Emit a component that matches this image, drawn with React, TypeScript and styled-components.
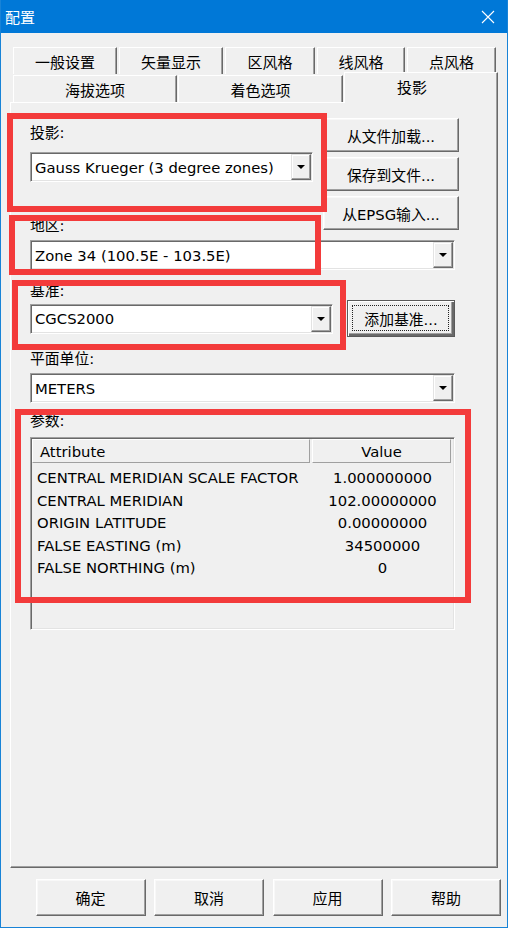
import React from "react";
import styled, { createGlobalStyle } from "styled-components";

const FONT = `"DejaVu Sans", "Noto Sans CJK SC", sans-serif`;

const GlobalStyle = createGlobalStyle`
  html, body { margin: 0; padding: 0; background: #f0f0f0; }
  body { font-family: ${FONT}; font-size: 14.8px; color: #000; }
  * { box-sizing: border-box; }
`;

const Window = styled.div`
  position: relative;
  width: 508px;
  height: 928px;
  background: #f0f0f0;
  border: 1px solid #1883d7;
  border-top: none;
  display: flex;
  flex-direction: column;
`;

const TitleBar = styled.div`
  height: 33px;
  background: #0078d7;
  display: flex;
  align-items: center;
  justify-content: space-between;
  padding-left: 4px;
  color: #fff;
  font-family: "Noto Sans CJK SC", sans-serif;
  font-size: 15px;
`;

const CloseBtn = styled.div`
  width: 38px;
  height: 33px;
  display: flex;
  align-items: center;
  justify-content: center;
`;

const Body = styled.div`
  flex: 1;
  display: flex;
  flex-direction: column;
  padding: 14px 0 0 9px;
`;

const TabRow = styled.div<{ $h: number; $gap: number }>`
  display: flex;
  align-items: flex-end;
  gap: ${({ $gap }) => $gap}px;
  height: ${({ $h }) => $h}px;
  margin-left: 3px;
`;

const Tab = styled.div<{ $w: number; $active?: boolean }>`
  position: relative;
  width: ${({ $w }) => $w}px;
  height: ${({ $active }) => ($active ? 31 : 27)}px;
  margin-bottom: ${({ $active }) => ($active ? -1 : 0)}px;
  z-index: ${({ $active }) => ($active ? 2 : 1)};
  display: flex;
  align-items: center;
  justify-content: center;
  padding-right: ${({ $active }) => ($active ? 18 : 0)}px;
  padding-bottom: ${({ $active }) => ($active ? 4 : 0)}px;
  background: #f0f0f0;
  border-top: 1px solid #fff;
  border-left: 1px solid #fff;
  border-right: 1px solid #696969;
  box-shadow: inset -1px 0 #a0a0a0;
  font-size: 15px;
`;

const Panel = styled.div`
  width: 488px;
  height: 766px;
  border: 1px solid;
  border-color: #fff #696969 #696969 #fff;
  box-shadow: inset -1px -1px #a0a0a0;
  padding: 15px 0 0 19px;
  display: flex;
  flex-direction: column;
`;

const TopArea = styled.div`
  display: flex;
  align-items: flex-start;
`;

const LeftCol = styled.div`
  width: 283px;
  display: flex;
  flex-direction: column;
`;

const RightCol = styled.div`
  margin-left: 10px;
  display: flex;
  flex-direction: column;
  gap: 5px;
`;

const Label = styled.div<{ $mt: number }>`
  margin-top: ${({ $mt }) => $mt}px;
  height: 18px;
  line-height: 18px;
  white-space: nowrap;
`;

const ComboBox = styled.div<{ $w: number; $mt?: number }>`
  width: ${({ $w }) => $w}px;
  height: 30px;
  margin-top: ${({ $mt = 0 }) => $mt}px;
  display: flex;
  background: #fff;
  border: 1px solid;
  border-color: #a0a0a0 #fff #fff #a0a0a0;
  box-shadow: inset 1px 1px #696969, inset -1px -1px #e3e3e3;
  padding: 1px;
`;

const ComboText = styled.div`
  flex: 1;
  padding-left: 3px;
  display: flex;
  align-items: center;
  white-space: nowrap;
`;

const DropBtn = styled.div`
  width: 20px;
  background: #f0f0f0;
  border: 1px solid;
  border-color: #e3e3e3 #696969 #696969 #e3e3e3;
  box-shadow: inset -1px -1px #a0a0a0, inset 1px 1px #fff;
  display: flex;
  align-items: center;
  justify-content: center;
`;

const Arrow = styled.div`
  width: 0;
  height: 0;
  border-left: 4px solid transparent;
  border-right: 4px solid transparent;
  border-top: 4px solid #000;
`;

const Button = styled.div<{ $w: number; $h: number; $default?: boolean }>`
  position: relative;
  width: ${({ $w }) => $w}px;
  height: ${({ $h }) => $h}px;
  display: flex;
  align-items: center;
  justify-content: center;
  background: #f0f0f0;
  border: 1px solid;
  border-color: ${({ $default }) =>
    $default ? "#5a5a5a" : "#fff #696969 #696969 #fff"};
  box-shadow: ${({ $default }) =>
    $default
      ? "inset 1px 1px #fff, inset -2px -2px #696969, inset -3px -3px #a0a0a0"
      : "inset -1px -1px #a0a0a0, inset 1px 1px #f8f8f8"};
  white-space: nowrap;
`;

const FocusRect = styled.span`
  position: absolute;
  inset: 4px 5px 5px 4px;
  border: 1px dotted #222;
`;

const DatumRow = styled.div`
  display: flex;
  align-items: center;
  gap: 14px;
`;

const ListView = styled.div`
  width: 425px;
  height: 193px;
  margin-top: 7px;
  background: #f0f0f0;
  border: 1px solid;
  border-color: #a0a0a0 #fff #fff #a0a0a0;
  box-shadow: inset 1px 1px #696969, inset -1px -1px #e3e3e3;
  padding: 1px;
`;

const HeaderRow = styled.div`
  display: flex;
  height: 24px;
`;

const HeaderCell = styled.div<{ $w?: number; $center?: boolean }>`
  ${({ $w }) => ($w ? `width: ${$w}px;` : "flex: 1;")}
  display: flex;
  align-items: center;
  justify-content: ${({ $center }) => ($center ? "center" : "flex-start")};
  padding-left: ${({ $center }) => ($center ? 0 : 7)}px;
  border: 1px solid;
  border-color: #fff #a0a0a0 #a0a0a0 #fff;
  margin-right: 2px;
`;

const Rows = styled.div`
  padding-top: 4px;
`;

const Row = styled.div`
  display: grid;
  grid-template-columns: 278px 1fr;
  height: 22.6px;
  line-height: 22.6px;
  padding-left: 5px;
  white-space: nowrap;
`;

const ValueCell = styled.div`
  text-align: center;
  padding-right: 3px;
`;

const ButtonRow = styled.div`
  display: flex;
  justify-content: flex-end;
  gap: 8.5px;
  margin-top: 11px;
  padding-right: 6px;
  font-size: 15px;
`;

const Mark = styled.div`
  position: absolute;
  border: 6px solid #f33b3b;
  pointer-events: none;
  z-index: 10;
`;

const params: [string, string][] = [
  ["CENTRAL MERIDIAN SCALE FACTOR", "1.000000000"],
  ["CENTRAL MERIDIAN", "102.00000000"],
  ["ORIGIN LATITUDE", "0.00000000"],
  ["FALSE EASTING (m)", "34500000"],
  ["FALSE NORTHING (m)", "0"],
];

// red annotation frames drawn over the dialog
const marks = [
  { left: 6, top: 113, width: 320, height: 99 },
  { left: 8, top: 215, width: 312, height: 60 },
  { left: 11, top: 280, width: 334, height: 70 },
  { left: 14, top: 409, width: 456, height: 194 },
];

const Combo: React.FC<{ w: number; mt?: number; text: string }> = ({ w, mt, text }) => (
  <ComboBox $w={w} $mt={mt}>
    <ComboText>{text}</ComboText>
    <DropBtn>
      <Arrow />
    </DropBtn>
  </ComboBox>
);

export default function App() {
  return (
    <Window>
      <GlobalStyle />
      <TitleBar>
        <span>配置</span>
        <CloseBtn>
          <svg width="14" height="14" viewBox="0 0 14 14">
            <path d="M1 1 L13 13 M13 1 L1 13" stroke="#fff" strokeWidth="1.1" fill="none" />
          </svg>
        </CloseBtn>
      </TitleBar>
      <Body>
        <TabRow $h={27} $gap={2}>
          <Tab $w={104}>一般设置</Tab>
          <Tab $w={104}>矢量显示</Tab>
          <Tab $w={90}>区风格</Tab>
          <Tab $w={88}>线风格</Tab>
          <Tab $w={89}>点风格</Tab>
        </TabRow>
        <TabRow $h={28} $gap={1}>
          <Tab $w={164}>海拔选项</Tab>
          <Tab $w={165}>着色选项</Tab>
          <Tab $w={154} $active>
            投影
          </Tab>
        </TabRow>
        <Panel>
          <TopArea>
            <LeftCol>
              <Label $mt={6}>投影:</Label>
              <Combo w={283} mt={10} text="Gauss Krueger (3 degree zones)" />
              <Label $mt={35}>地区:</Label>
            </LeftCol>
            <RightCol>
              <Button $w={136} $h={34}>从文件加载...</Button>
              <Button $w={136} $h={34}>保存到文件...</Button>
              <Button $w={136} $h={34}>从EPSG输入...</Button>
            </RightCol>
          </TopArea>
          <Combo w={425} mt={5} text="Zone 34 (100.5E - 103.5E)" />
          <Label $mt={12}>基准:</Label>
          <DatumRow>
            <Combo w={303} text="CGCS2000" />
            <Button $w={108} $h={37} $default>
              <FocusRect />
              添加基准...
            </Button>
          </DatumRow>
          <Label $mt={13}>平面单位:</Label>
          <Combo w={425} mt={5} text="METERS" />
          <Label $mt={9}>参数:</Label>
          <ListView>
            <HeaderRow>
              <HeaderCell $w={278}>Attribute</HeaderCell>
              <HeaderCell $center>Value</HeaderCell>
            </HeaderRow>
            <Rows>
              {params.map(([k, v]) => (
                <Row key={k}>
                  <span>{k}</span>
                  <ValueCell>{v}</ValueCell>
                </Row>
              ))}
            </Rows>
          </ListView>
        </Panel>
        <ButtonRow>
          <Button $w={110} $h={37}>确定</Button>
          <Button $w={110} $h={37}>取消</Button>
          <Button $w={110} $h={37}>应用</Button>
          <Button $w={110} $h={37}>帮助</Button>
        </ButtonRow>
      </Body>
      {marks.map((m, i) => (
        <Mark key={i} style={{ left: m.left, top: m.top, width: m.width, height: m.height }} />
      ))}
    </Window>
  );
}
